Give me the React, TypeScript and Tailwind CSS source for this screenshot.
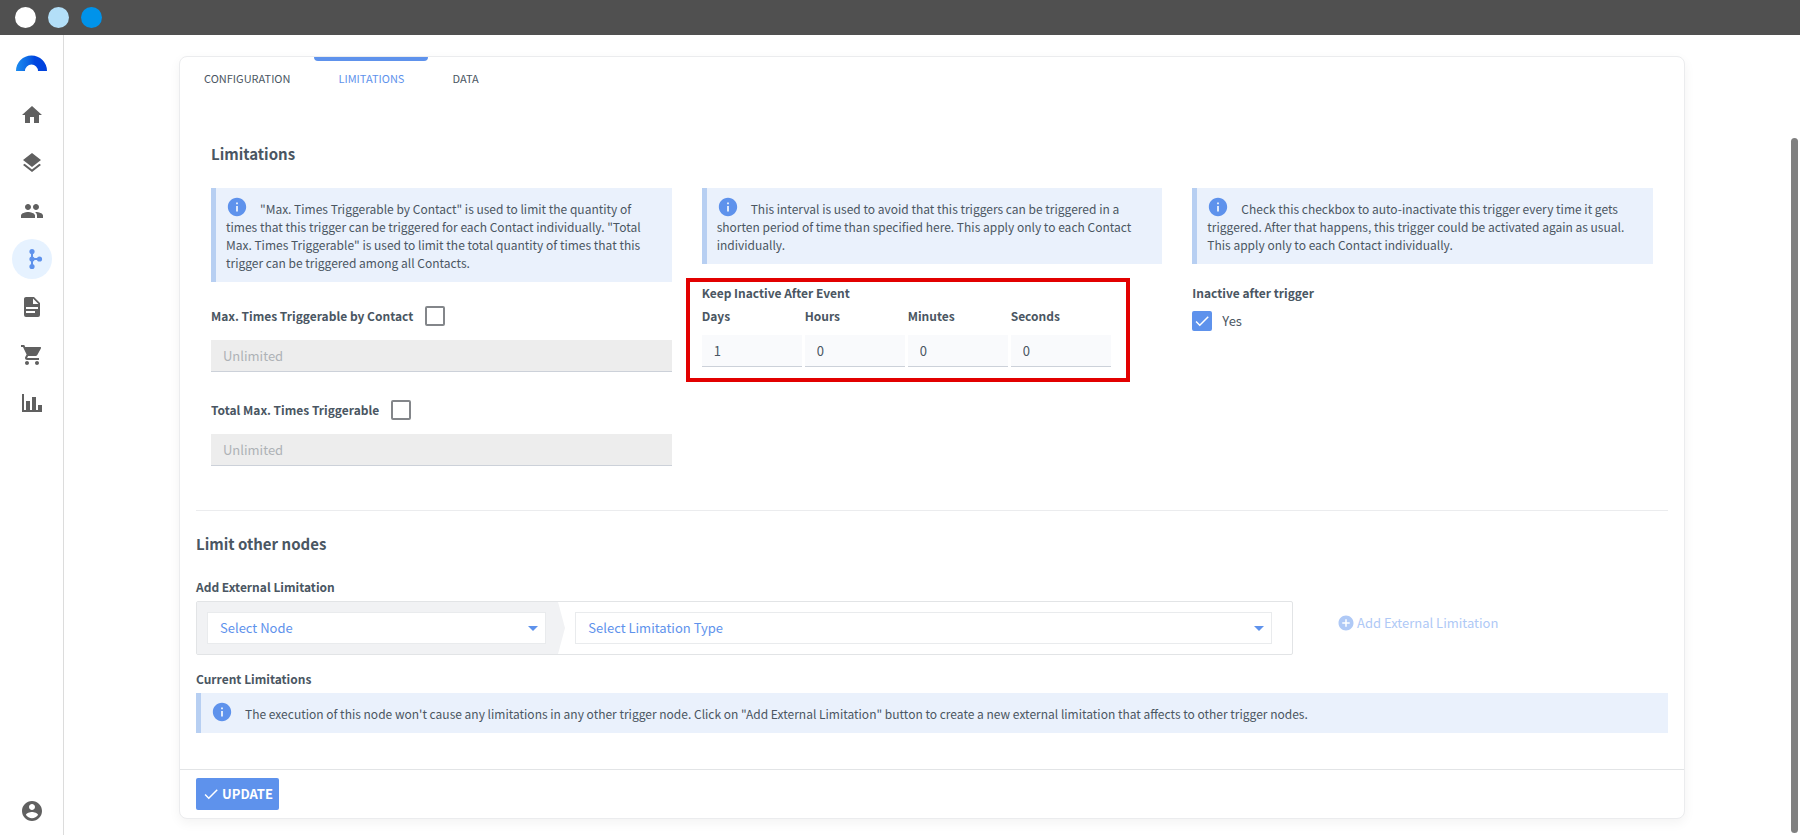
import React, { useState } from "react";
import {
  MdAddCircle,
  MdArrowDropDown,
  MdCheck,
  MdHome,
  MdInfo,
  MdLayers,
  MdPeople,
  MdShoppingCart,
} from "react-icons/md";

interface NavItem {
  label: string;
  icon: React.ReactNode;
  active?: boolean;
}

const PathIcon: React.FC<{ d: string }> = ({ d }) => (
  <svg viewBox="0 0 24 24" className="size-6" fill="currentColor" aria-hidden="true">
    <path d={d} />
  </svg>
);

const BranchIcon = () => (
  <svg viewBox="0 0 24 24" className="size-6" fill="currentColor" aria-hidden="true">
    <path d="M11 4h2v7h7v2h-7v7h-2z" />
    <circle cx="12" cy="4.5" r="2.6" />
    <circle cx="12" cy="12" r="2.6" />
    <circle cx="12" cy="19.5" r="2.6" />
    <circle cx="19.5" cy="12" r="2.6" />
  </svg>
);

const Logo = () => (
  <svg viewBox="0 0 31 16" className="h-4 w-[31px]" aria-hidden="true">
    <defs>
      <linearGradient id="arc" x1="0" x2="1" y1="0" y2="0">
        <stop offset="0" stopColor="#1c8cf0" />
        <stop offset="0.4" stopColor="#0c66e4" />
        <stop offset="0.6" stopColor="#0046e0" />
        <stop offset="1" stopColor="#0040dc" />
      </linearGradient>
    </defs>
    <path d="M0 16a15.5 15.5 0 0 1 31 0h-9a6.5 6.5 0 0 0-13 0z" fill="url(#arc)" />
  </svg>
);

const navItems: NavItem[] = [
  { label: "Home", icon: <MdHome className="size-6" /> },
  { label: "Layers", icon: <MdLayers className="size-6" /> },
  { label: "Contacts", icon: <MdPeople className="size-6" /> },
  { label: "Automation", icon: <BranchIcon />, active: true },
  {
    label: "Documents",
    icon: (
      <PathIcon d="M13 9h5.5L13 3.5V9M6 2h8l6 6v12a2 2 0 0 1-2 2H6a2 2 0 0 1-2-2V4c0-1.1.9-2 2-2m9 16v-2H6v2h9m3-4v-2H6v2h12z" />
    ),
  },
  { label: "Shop", icon: <MdShoppingCart className="size-6" /> },
  {
    label: "Reports",
    icon: <PathIcon d="M22 21H2V3h2v16h2v-9h4v9h2V6h4v13h2v-5h4v7z" />,
  },
];

const Sidebar = () => (
  <nav className="flex w-16 shrink-0 flex-col items-center border-r border-[#dcdcdc] pt-5 text-[#606060]">
    <a href="#" aria-label="Dashboard">
      <Logo />
    </a>
    <div className="mt-6 flex flex-col gap-2">
      {navItems.map((item) => (
        <a
          key={item.label}
          href="#"
          aria-label={item.label}
          className={
            item.active
              ? "flex size-10 items-center justify-center rounded-full bg-[#e6f2ff] text-[#5e92ec]"
              : "flex size-10 items-center justify-center rounded-full"
          }
        >
          {item.icon}
        </a>
      ))}
    </div>
    <a href="#" aria-label="Account" className="mt-auto mb-3">
      <PathIcon d="M12 2C6.48 2 2 6.48 2 12s4.48 10 10 10 10-4.48 10-10S17.52 2 12 2zm0 3c1.66 0 3 1.34 3 3s-1.34 3-3 3-3-1.34-3-3 1.34-3 3-3zm0 14.2c-2.5 0-4.71-1.28-6-3.22.03-1.99 4-3.08 6-3.08 1.99 0 5.97 1.09 6 3.08-1.29 1.94-3.5 3.22-6 3.22z" />
    </a>
  </nav>
);

const InfoBox: React.FC<{ children: React.ReactNode }> = ({ children }) => (
  <p className="border-l-5 border-[#b7cff2] bg-[#eaf1fc] px-[10px] pt-3 pb-[10px] text-[12px] leading-[18px]">
    <MdInfo className="-my-2 mr-3 inline size-[22px] align-[4px] text-[#5e92ec]" />
    {children}
  </p>
);

interface CheckProps {
  id: string;
  checked: boolean;
  onChange: (value: boolean) => void;
}

const Check: React.FC<CheckProps> = ({ id, checked, onChange }) => (
  <span className="relative flex size-5 shrink-0">
    <input
      id={id}
      type="checkbox"
      checked={checked}
      onChange={(e) => onChange(e.target.checked)}
      className="size-5 appearance-none rounded-xs border-2 border-[#83868a] checked:border-[#5e92ec] checked:bg-[#5e92ec]"
    />
    {checked && (
      <MdCheck className="pointer-events-none absolute inset-0 m-auto size-[18px] text-white" />
    )}
  </span>
);

const LimitField: React.FC<{ id: string; label: string }> = ({ id, label }) => {
  const [enabled, setEnabled] = useState(false);

  return (
    <div>
      <div className="flex items-center gap-3">
        <label htmlFor={id} className="text-[12px] leading-[18px] font-semibold">
          {label}
        </label>
        <Check id={id} checked={enabled} onChange={setEnabled} />
      </div>
      <input
        type="text"
        aria-label={label}
        placeholder="Unlimited"
        disabled={!enabled}
        className="mt-[14px] h-8 w-full border-b border-[#ccd1d9] bg-[#ededed] px-3 placeholder:text-[#aeb2b6]"
      />
    </div>
  );
};

const intervals = [
  { label: "Days", value: "1" },
  { label: "Hours", value: "0" },
  { label: "Minutes", value: "0" },
  { label: "Seconds", value: "0" },
];

const SelectBox: React.FC<{ label: string }> = ({ label }) => (
  <div className="relative">
    <select
      aria-label={label}
      className="h-8 w-full appearance-none border border-[#e9ebed] bg-white px-3 text-[#5e92ec]"
    >
      <option>{label}</option>
    </select>
    <MdArrowDropDown className="pointer-events-none absolute inset-y-0 right-px my-auto size-6 text-[#5e92ec]" />
  </div>
);

const tabs = ["CONFIGURATION", "LIMITATIONS", "DATA"];

const App: React.FC = () => {
  const [tab, setTab] = useState("LIMITATIONS");
  const [inactive, setInactive] = useState(true);

  return (
    <div className="flex min-h-screen flex-col bg-white font-['Noto_Sans_CJK_SC',sans-serif] text-[13px] leading-[18px] text-[#4a5662]">
      <header className="flex h-[35px] shrink-0 items-center gap-3 bg-[#505050] px-[15px]">
        <span className="size-[21px] rounded-full bg-white" />
        <span className="size-[21px] rounded-full bg-[#b3dff8]" />
        <span className="size-[21px] rounded-full bg-[#0093ea]" />
      </header>

      <div className="relative flex flex-1">
        <Sidebar />

        <main className="flex-1 px-[115px] pt-[21px] pb-4">
          <div className="rounded-lg border border-[#ebecee] bg-white shadow-[0_4px_12px_rgba(0,0,0,0.05)]">
            <div role="tablist" className="flex text-[11px]">
              {tabs.map((name) => (
                <button
                  key={name}
                  type="button"
                  role="tab"
                  aria-selected={tab === name}
                  onClick={() => setTab(name)}
                  className={
                    tab === name
                      ? "relative h-[42px] px-6 text-[#5e92ec]"
                      : "relative h-[42px] px-6"
                  }
                >
                  {tab === name && (
                    <span className="absolute inset-x-0 top-0 h-1 rounded-b-sm bg-[#5e92ec]" />
                  )}
                  {name}
                </button>
              ))}
            </div>

            <div className="px-4">
              <section className="px-[15px] pt-[43px]">
                <h2 className="text-[15px] leading-6 font-bold">Limitations</h2>

                <div className="mt-[22px] grid grid-cols-3 items-start gap-[30px]">
                  <div>
                    <InfoBox>
                      "Max. Times Triggerable by Contact" is used to limit the quantity of times that
                      this trigger can be triggered for each Contact individually. "Total Max. Times
                      Triggerable" is used to limit the total quantity of times that this trigger can
                      be triggered among all Contacts.
                    </InfoBox>
                    <div className="mt-6 flex flex-col gap-7">
                      <LimitField id="max-contact" label="Max. Times Triggerable by Contact" />
                      <LimitField id="max-total" label="Total Max. Times Triggerable" />
                    </div>
                  </div>

                  <div>
                    <InfoBox>
                      This interval is used to avoid that this triggers can be triggered in a shorten
                      period of time than specified here. This apply only to each Contact
                      individually.
                    </InfoBox>
                    <div className="relative mt-5 w-[412px]">
                      <fieldset>
                        <legend className="text-[12px] leading-[18px] font-semibold">
                          Keep Inactive After Event
                        </legend>
                        <div className="mt-[5px] flex gap-[3px]">
                          {intervals.map((item) => (
                            <label
                              key={item.label}
                              className="flex flex-col gap-[10px] text-[12px] leading-[18px] font-semibold"
                            >
                              {item.label}
                              <input
                                type="text"
                                defaultValue={item.value}
                                className="h-8 w-[100px] border-b border-[#ccd1d9] bg-[#f9fafc] px-3 text-[13px] font-normal"
                              />
                            </label>
                          ))}
                        </div>
                      </fieldset>
                      {/* highlight frame */}
                      <div className="pointer-events-none absolute -inset-x-4 -top-[6px] -bottom-[15px] border-4 border-[#e20000]" />
                    </div>
                  </div>

                  <div>
                    <InfoBox>
                      Check this checkbox to auto-inactivate this trigger every time it gets
                      triggered. After that happens, this trigger could be activated again as usual.
                      This apply only to each Contact individually.
                    </InfoBox>
                    <h3 className="mt-5 text-[12px] leading-[18px] font-semibold">
                      Inactive after trigger
                    </h3>
                    <div className="mt-[9px] flex items-center gap-[10px]">
                      <Check id="inactive" checked={inactive} onChange={setInactive} />
                      <label htmlFor="inactive">Yes</label>
                    </div>
                  </div>
                </div>
              </section>

              <hr className="mt-11 border-[#ebecee]" />

              <section className="pt-[21px] pb-9">
                <h2 className="text-[15px] leading-6 font-bold">Limit other nodes</h2>

                <h3 className="mt-[22px] text-[12px] leading-[18px] font-semibold">
                  Add External Limitation
                </h3>
                <div className="mt-[5px] flex items-center">
                  <div className="w-3/4 pr-[7px]">
                    <div className="flex rounded-xs border border-[#e2e4e6]">
                      <div className="w-[33%] bg-[#f1f2f4] py-[10px] pr-3 pl-[10px]">
                        <SelectBox label="Select Node" />
                      </div>
                      <svg
                        viewBox="0 0 8 52"
                        preserveAspectRatio="none"
                        className="h-[52px] w-[7px] shrink-0"
                        aria-hidden="true"
                      >
                        <path d="M0 0l8 26-8 26z" fill="#f1f2f4" />
                      </svg>
                      <div className="flex-1 py-[10px] pr-5 pl-[10px]">
                        <SelectBox label="Select Limitation Type" />
                      </div>
                    </div>
                  </div>
                  <button
                    type="button"
                    disabled
                    className="mb-[10px] ml-[37px] flex items-center gap-[2px] text-[#afc9f6]"
                  >
                    <MdAddCircle className="size-[18px]" />
                    Add External Limitation
                  </button>
                </div>

                <h3 className="mt-[15px] mb-[5px] text-[12px] leading-[18px] font-semibold">
                  Current Limitations
                </h3>
                <InfoBox>
                  The execution of this node won't cause any limitations in any other trigger node.
                  Click on "Add External Limitation" button to create a new external limitation that
                  affects to other trigger nodes.
                </InfoBox>
              </section>
            </div>

            <footer className="border-t border-[#e2e4e6] px-4 py-2">
              <button
                type="button"
                className="flex h-8 items-center gap-[2px] rounded-xs bg-[#5e92ec] px-[6px] font-bold text-white"
              >
                <MdCheck className="size-[18px]" />
                UPDATE
              </button>
            </footer>
          </div>
        </main>

        {/* scrollbar thumb */}
        <div className="absolute top-[103px] right-[2px] bottom-[2px] w-[7px] rounded-full bg-[#808080]" />
      </div>
    </div>
  );
};

export default App;
